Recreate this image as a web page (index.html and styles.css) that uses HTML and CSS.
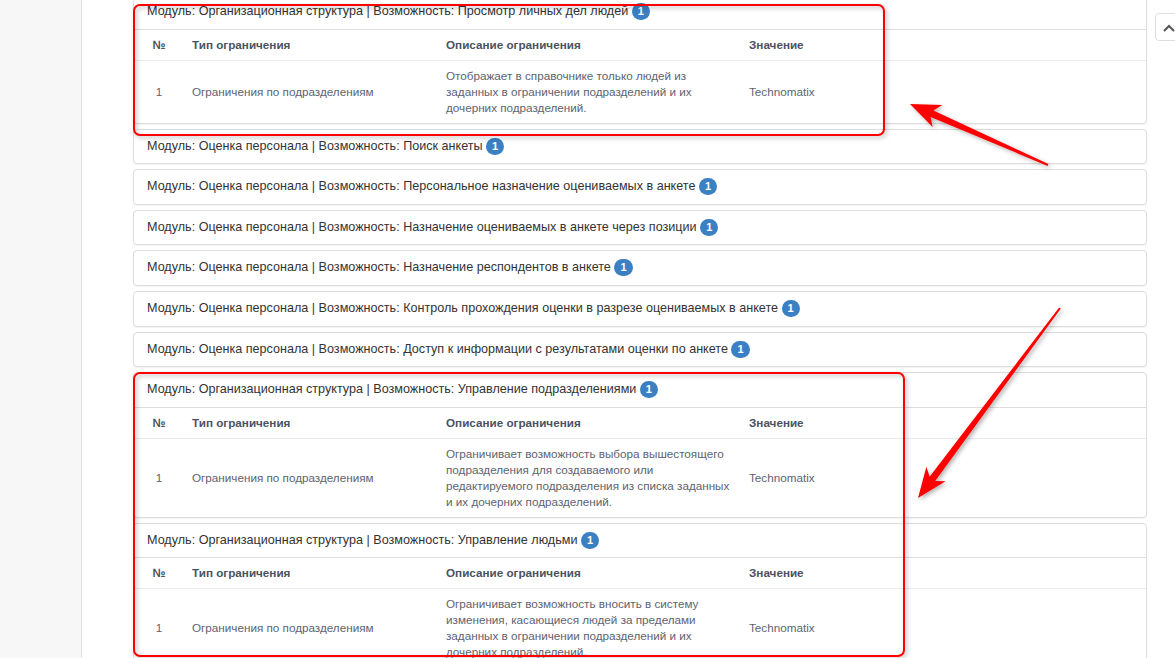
FILE: index.html
```html
<!DOCTYPE html>
<html lang="ru">
<head>
    <meta charset="UTF-8">
    <meta name="viewport" content="width=device-width, initial-scale=1.0">
    <title>Ограничения ролей</title>
    <link rel="stylesheet" href="styles.css">
</head>
<body>
    <div class="layout">
        <aside class="sidebar"></aside>

        <main class="content">
            <div class="panel-list">
                <div class="panel">
                    <div class="panel-heading">Модуль: Организационная структура | Возможность: Просмотр личных дел людей <span class="badge">1</span></div>
                    <table class="limits">
                        <colgroup>
                            <col class="col-num"><col class="col-type"><col class="col-desc"><col>
                        </colgroup>
                        <thead>
                            <tr><th class="num">№</th><th>Тип ограничения</th><th>Описание ограничения</th><th>Значение</th></tr>
                        </thead>
                        <tbody>
                            <tr>
                                <td class="num">1</td>
                                <td>Ограничения по подразделениям</td>
                                <td>Отображает в справочнике только людей из заданных в ограничении подразделений и их дочерних подразделений.</td>
                                <td>Technomatix</td>
                            </tr>
                        </tbody>
                    </table>
                </div>

                <div class="panel">
                    <div class="panel-heading">Модуль: Оценка персонала | Возможность: Поиск анкеты <span class="badge">1</span></div>
                </div>
                <div class="panel">
                    <div class="panel-heading">Модуль: Оценка персонала | Возможность: Персональное назначение оцениваемых в анкете <span class="badge">1</span></div>
                </div>
                <div class="panel">
                    <div class="panel-heading">Модуль: Оценка персонала | Возможность: Назначение оцениваемых в анкете через позиции <span class="badge">1</span></div>
                </div>
                <div class="panel">
                    <div class="panel-heading">Модуль: Оценка персонала | Возможность: Назначение респондентов в анкете <span class="badge">1</span></div>
                </div>
                <div class="panel">
                    <div class="panel-heading">Модуль: Оценка персонала | Возможность: Контроль прохождения оценки в разрезе оцениваемых в анкете <span class="badge">1</span></div>
                </div>
                <div class="panel">
                    <div class="panel-heading">Модуль: Оценка персонала | Возможность: Доступ к информации с результатами оценки по анкете <span class="badge">1</span></div>
                </div>

                <div class="panel">
                    <div class="panel-heading">Модуль: Организационная структура | Возможность: Управление подразделениями <span class="badge">1</span></div>
                    <table class="limits">
                        <colgroup>
                            <col class="col-num"><col class="col-type"><col class="col-desc"><col>
                        </colgroup>
                        <thead>
                            <tr><th class="num">№</th><th>Тип ограничения</th><th>Описание ограничения</th><th>Значение</th></tr>
                        </thead>
                        <tbody>
                            <tr>
                                <td class="num">1</td>
                                <td>Ограничения по подразделениям</td>
                                <td>Ограничивает возможность выбора вышестоящего подразделения для создаваемого или редактируемого подразделения из списка заданных и их дочерних подразделений.</td>
                                <td>Technomatix</td>
                            </tr>
                        </tbody>
                    </table>
                </div>

                <div class="panel">
                    <div class="panel-heading">Модуль: Организационная структура | Возможность: Управление людьми <span class="badge">1</span></div>
                    <table class="limits">
                        <colgroup>
                            <col class="col-num"><col class="col-type"><col class="col-desc"><col>
                        </colgroup>
                        <thead>
                            <tr><th class="num">№</th><th>Тип ограничения</th><th>Описание ограничения</th><th>Значение</th></tr>
                        </thead>
                        <tbody>
                            <tr>
                                <td class="num">1</td>
                                <td>Ограничения по подразделениям</td>
                                <td>Ограничивает возможность вносить в систему изменения, касающиеся людей за пределами заданных в ограничении подразделений и их дочерних подразделений.</td>
                                <td>Technomatix</td>
                            </tr>
                        </tbody>
                    </table>
                </div>
            </div>
        </main>
    </div>

    <button class="to-top" type="button">
        <svg width="12" height="8" viewBox="0 0 12 8"><path d="M1 7 L6 2 L11 7" fill="none" stroke="#555" stroke-width="2"/></svg>
    </button>

    <!-- screenshot annotations -->
    <svg class="marks" width="1175" height="658" viewBox="0 0 1175 658">
        <defs>
            <filter id="shadow" x="-10%" y="-10%" width="120%" height="120%">
                <feDropShadow dx="2" dy="2" stdDeviation="2" flood-color="#000" flood-opacity="0.3"/>
            </filter>
        </defs>
        <g filter="url(#shadow)">
            <rect x="134" y="5" width="750" height="130" rx="6" fill="none" stroke="#f00" stroke-width="2"/>
            <rect x="134" y="373" width="770" height="283" rx="6" fill="none" stroke="#f00" stroke-width="2"/>
            <polygon fill="#f00" points="910,104 942.3,105.1 933.4,110.5 1048.4,164.1 1047.6,165.9 930.6,116.9 932.6,127.1"/>
            <polygon fill="#f00" points="918,498 945.6,481.2 935.2,480.9 1060.8,308.6 1059.2,307.4 929.6,476.7 926.4,466.8"/>
        </g>
    </svg>
</body>
</html>
```

FILE: styles.css
```css
body {
    margin: 0;
    font-family: "Liberation Sans", Arial, sans-serif;
    color: #333;
    background: #fff;
    overflow: hidden;
}

.layout {
    display: flex;
    height: 100vh;
}

.sidebar {
    flex: none;
    width: 81px;
    background: #f7f7f7;
    border-right: 1px solid #e3e3e3;
}

.content {
    flex: 1;
    padding: 0 28px 0 51px;
}

.panel-list {
    display: flex;
    flex-direction: column;
    gap: 5px;
    margin-top: -6px;
}

.panel {
    background: #fff;
    border: 1px solid #ddd;
    border-radius: 4px;
    box-shadow: 0 1px 1px rgba(0,0,0,0.05);
}

.panel-heading {
    height: 17.6px;
    padding: 8px 13px;
    font-size: 12.6px;
    line-height: 17.6px;
    white-space: nowrap;
}

.badge {
    display: inline-block;
    min-width: 18px;
    height: 17px;
    padding: 0 6px;
    box-sizing: border-box;
    border-radius: 9px;
    background: #3b80c3;
    color: #fff;
    font-size: 11px;
    font-weight: bold;
    line-height: 17px;
    text-align: center;
    vertical-align: top;
}

.limits {
    width: 100%;
    table-layout: fixed;
    border-collapse: collapse;
    border-top: 1px solid #ddd;
    font-size: 11.7px;
    line-height: 16px;
}

.col-num { width: 50px; }
.col-type { width: 254px; }
.col-desc { width: 303px; }

.limits th,
.limits td {
    padding: 7px 8px;
    text-align: left;
    vertical-align: middle;
}

.limits th {
    color: #4b5262;
    font-weight: bold;
    border-bottom: 1px solid #e8ecef;
}

.limits td {
    color: #5d6371;
}

.limits .num {
    text-align: center;
}

.to-top {
    position: fixed;
    top: 13px;
    left: 1155px;
    width: 32px;
    height: 28px;
    padding: 0;
    background: #fff;
    border: 1px solid #ddd;
    border-radius: 4px;
    text-align: left;
}

.to-top svg {
    margin-left: 7px;
}

.marks {
    position: absolute;
    top: 0;
    left: 0;
    pointer-events: none;
}
```
